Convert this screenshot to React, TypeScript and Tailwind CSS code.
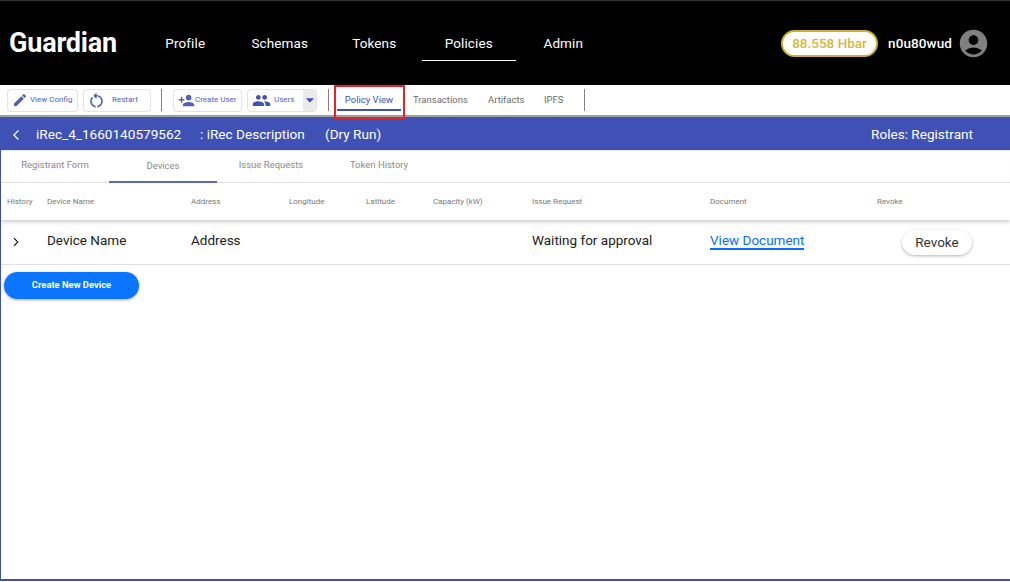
import React from "react";
import { MdEdit, MdRestartAlt, MdPersonAdd, MdPeople, MdArrowDropDown, MdAccountCircle, MdArrowBackIosNew, MdArrowForwardIos } from "react-icons/md";

const nav = ["Profile", "Schemas", "Tokens", "Policies", "Admin"];
const font = "font-['Roboto',sans-serif]";

function ToolButton({ icon, label, w, gap }: { icon: React.ReactNode; label: string; w: string; gap: string }) {
  return (
    <div className={`${w} ${gap} h-[23px] flex items-center border border-[#e3e3e3] rounded-[4px] pl-[5px] bg-white text-[8px] text-[#4f5fb8] shadow-[0_0_1px_rgba(0,0,0,0.06)]`}>
      {icon}
      <span className="whitespace-nowrap">{label}</span>
    </div>
  );
}

const cols = "grid grid-cols-[40px_144px_98px_77px_67px_99px_178px_167px_1fr] pl-[6px]";

export default function App() {
  return (
    <div className={`${font} relative w-[1010px] h-[582px] bg-white overflow-hidden flex flex-col`}>
      <header className="h-[85px] shrink-0 bg-black border-t border-[#333] flex items-center pl-[9px] pt-[1px] text-white">
        <div className="w-[129px] text-[27px] font-bold tracking-[-0.2px] leading-none">Guardian</div>
        <nav className="flex h-[83px]">
          {nav.map((n) => (
            <div key={n} className="w-[94.5px] flex items-center justify-center relative text-[13.5px]">
              <span className="leading-none tracking-[0.1px]">{n}</span>
              {n === "Policies" && <span className="absolute left-0 right-0 top-[58px] h-px bg-white" />}
            </div>
          ))}
        </nav>
        <div className="ml-auto flex items-center pr-[20px] mt-[-1px]">
          <div className="w-[97px] h-[27px] rounded-full bg-white border-2 border-[#c9b22c] text-[#d4b83a] text-[13.5px] font-medium flex items-center justify-center">88.558 Hbar</div>
          <span className="ml-[10px] text-[13.5px] font-medium tracking-[0.1px]">n0u80wud</span>
          <MdAccountCircle className="ml-[5px] text-[#808080]" size={33} />
        </div>
      </header>

      <div className="h-[32px] shrink-0 flex items-center pl-[7px] border-b-[2px] border-[#a0a0a0] bg-white">
        <ToolButton icon={<MdEdit size={16} className="mr-[2px] ml-[-1px]" />} label="View Config" w="w-[71px]" gap="mr-[5px]" />
        <ToolButton icon={<MdRestartAlt size={19} className="mr-[6px] ml-[-2px]" />} label="Restart" w="w-[68px]" gap="mr-[10px]" />
        <div className="w-px h-[22px] bg-[#808080] mr-[11px]" />
        <ToolButton icon={<MdPersonAdd size={17} className="ml-[-1px]" />} label="Create User" w="w-[69px]" gap="mr-[5px]" />
        <div className="w-[70px] h-[23px] flex items-center border border-[#e3e3e3] rounded-[4px] pl-[4px] text-[8px] text-[#4f5fb8] mr-[11px]">
          <MdPeople size={19} className="mr-[3px] text-[#3f51b5]" />
          <span>Users</span>
          <span className="ml-auto w-[13px] h-full bg-[#ebebeb] flex items-center justify-center rounded-r-[3px]">
            <MdArrowDropDown size={20} className="text-[#3f51b5] shrink-0" />
          </span>
        </div>
        <div className="w-px h-[22px] bg-[#808080] mr-[8px]" />
        <div className="w-[64px] h-[22px] flex items-center justify-center text-[9.5px] text-[#3f51b5] border-b-2 border-[#3f51b5] pt-[3px] mr-[12px]">Policy View</div>
        <span className="text-[9.5px] text-[#6b6b6b] w-[75px]">Transactions</span>
        <span className="text-[9.5px] text-[#6b6b6b] w-[56px]">Artifacts</span>
        <span className="text-[9.5px] text-[#6b6b6b] w-[40px]">IPFS</span>
        <div className="w-px h-[22px] bg-[#808080]" />
      </div>

      <div className="h-[33px] shrink-0 bg-[#3f51b5] text-white flex items-center text-[13.6px] pt-[2px]">
        <MdArrowBackIosNew size={12} className="ml-[10px] mr-[14px]" />
        <span className="w-[164px]">iRec_4_1660140579562</span>
        <span className="w-[125px]">: iRec Description</span>
        <span>(Dry Run)</span>
        <span className="ml-auto mr-[37px]">Roles: Registrant</span>
      </div>

      <main className="flex-1 border-l border-b-2 border-[#3f51b5] mb-px flex flex-col items-start">
        <div className="h-[33px] w-full flex border-b border-[#e6e6e6] text-[9.5px] text-[#8a8a8a] shadow-[inset_0_1px_1px_rgba(0,0,0,0.1)]">
          {["Registrant Form", "Devices", "Issue Requests", "Token History"].map((t) => (
            <div key={t} className={`w-[108px] flex items-center justify-center ${t === "Devices" ? "border-b-2 border-[#5c6bc0] mb-[-1px] pt-[1px]" : "pb-[1px]"}`}>{t}</div>
          ))}
        </div>
        <div className={`${cols} w-full h-[37px] items-center text-[8px] text-[#777] shadow-[0_2px_4px_rgba(0,0,0,0.2)] pt-[1px]`}>
          {["History", "Device Name", "Address", "Longitude", "Latitude", "Capacity (kW)", "Issue Request", "Document", "Revoke"].map((h) => (
            <div key={h} className="whitespace-nowrap">{h}</div>
          ))}
        </div>
        <div className={`${cols} w-full h-[45px] items-center text-[13.5px] text-[#212121] border-b border-[#e0e0e0]`}>
          <div><MdArrowForwardIos size={10} className="ml-[4px] text-black" /></div>
          <div className="mt-[-3px]">Device Name</div>
          <div className="mt-[-3px]">Address</div>
          <div /><div /><div />
          <div className="mt-[-3px]">Waiting for approval</div>
          <div className="mt-[-3px]"><span className="text-[#0b6cff] border-b-2 border-[#0b6cff] leading-[15px] inline-block">View Document</span></div>
          <div className="relative h-full">
            <div className="absolute left-[25px] top-[10px] w-[70px] h-[25px] rounded-full bg-white shadow-[0_1px_3px_rgba(0,0,0,0.3)] flex items-center justify-center text-[#333]">Revoke</div>
          </div>
        </div>
        <button className="mt-[7px] ml-[3px] w-[135px] h-[27px] rounded-full bg-[#0b75ff] text-white text-[9.4px] font-bold shadow-[0_1px_3px_rgba(0,0,0,0.35)]">Create New Device</button>
      </main>

      <div className="absolute left-[334px] top-[85px] w-[71px] h-[34px] border-2 border-[#e8202a]" />
    </div>
  );
}
